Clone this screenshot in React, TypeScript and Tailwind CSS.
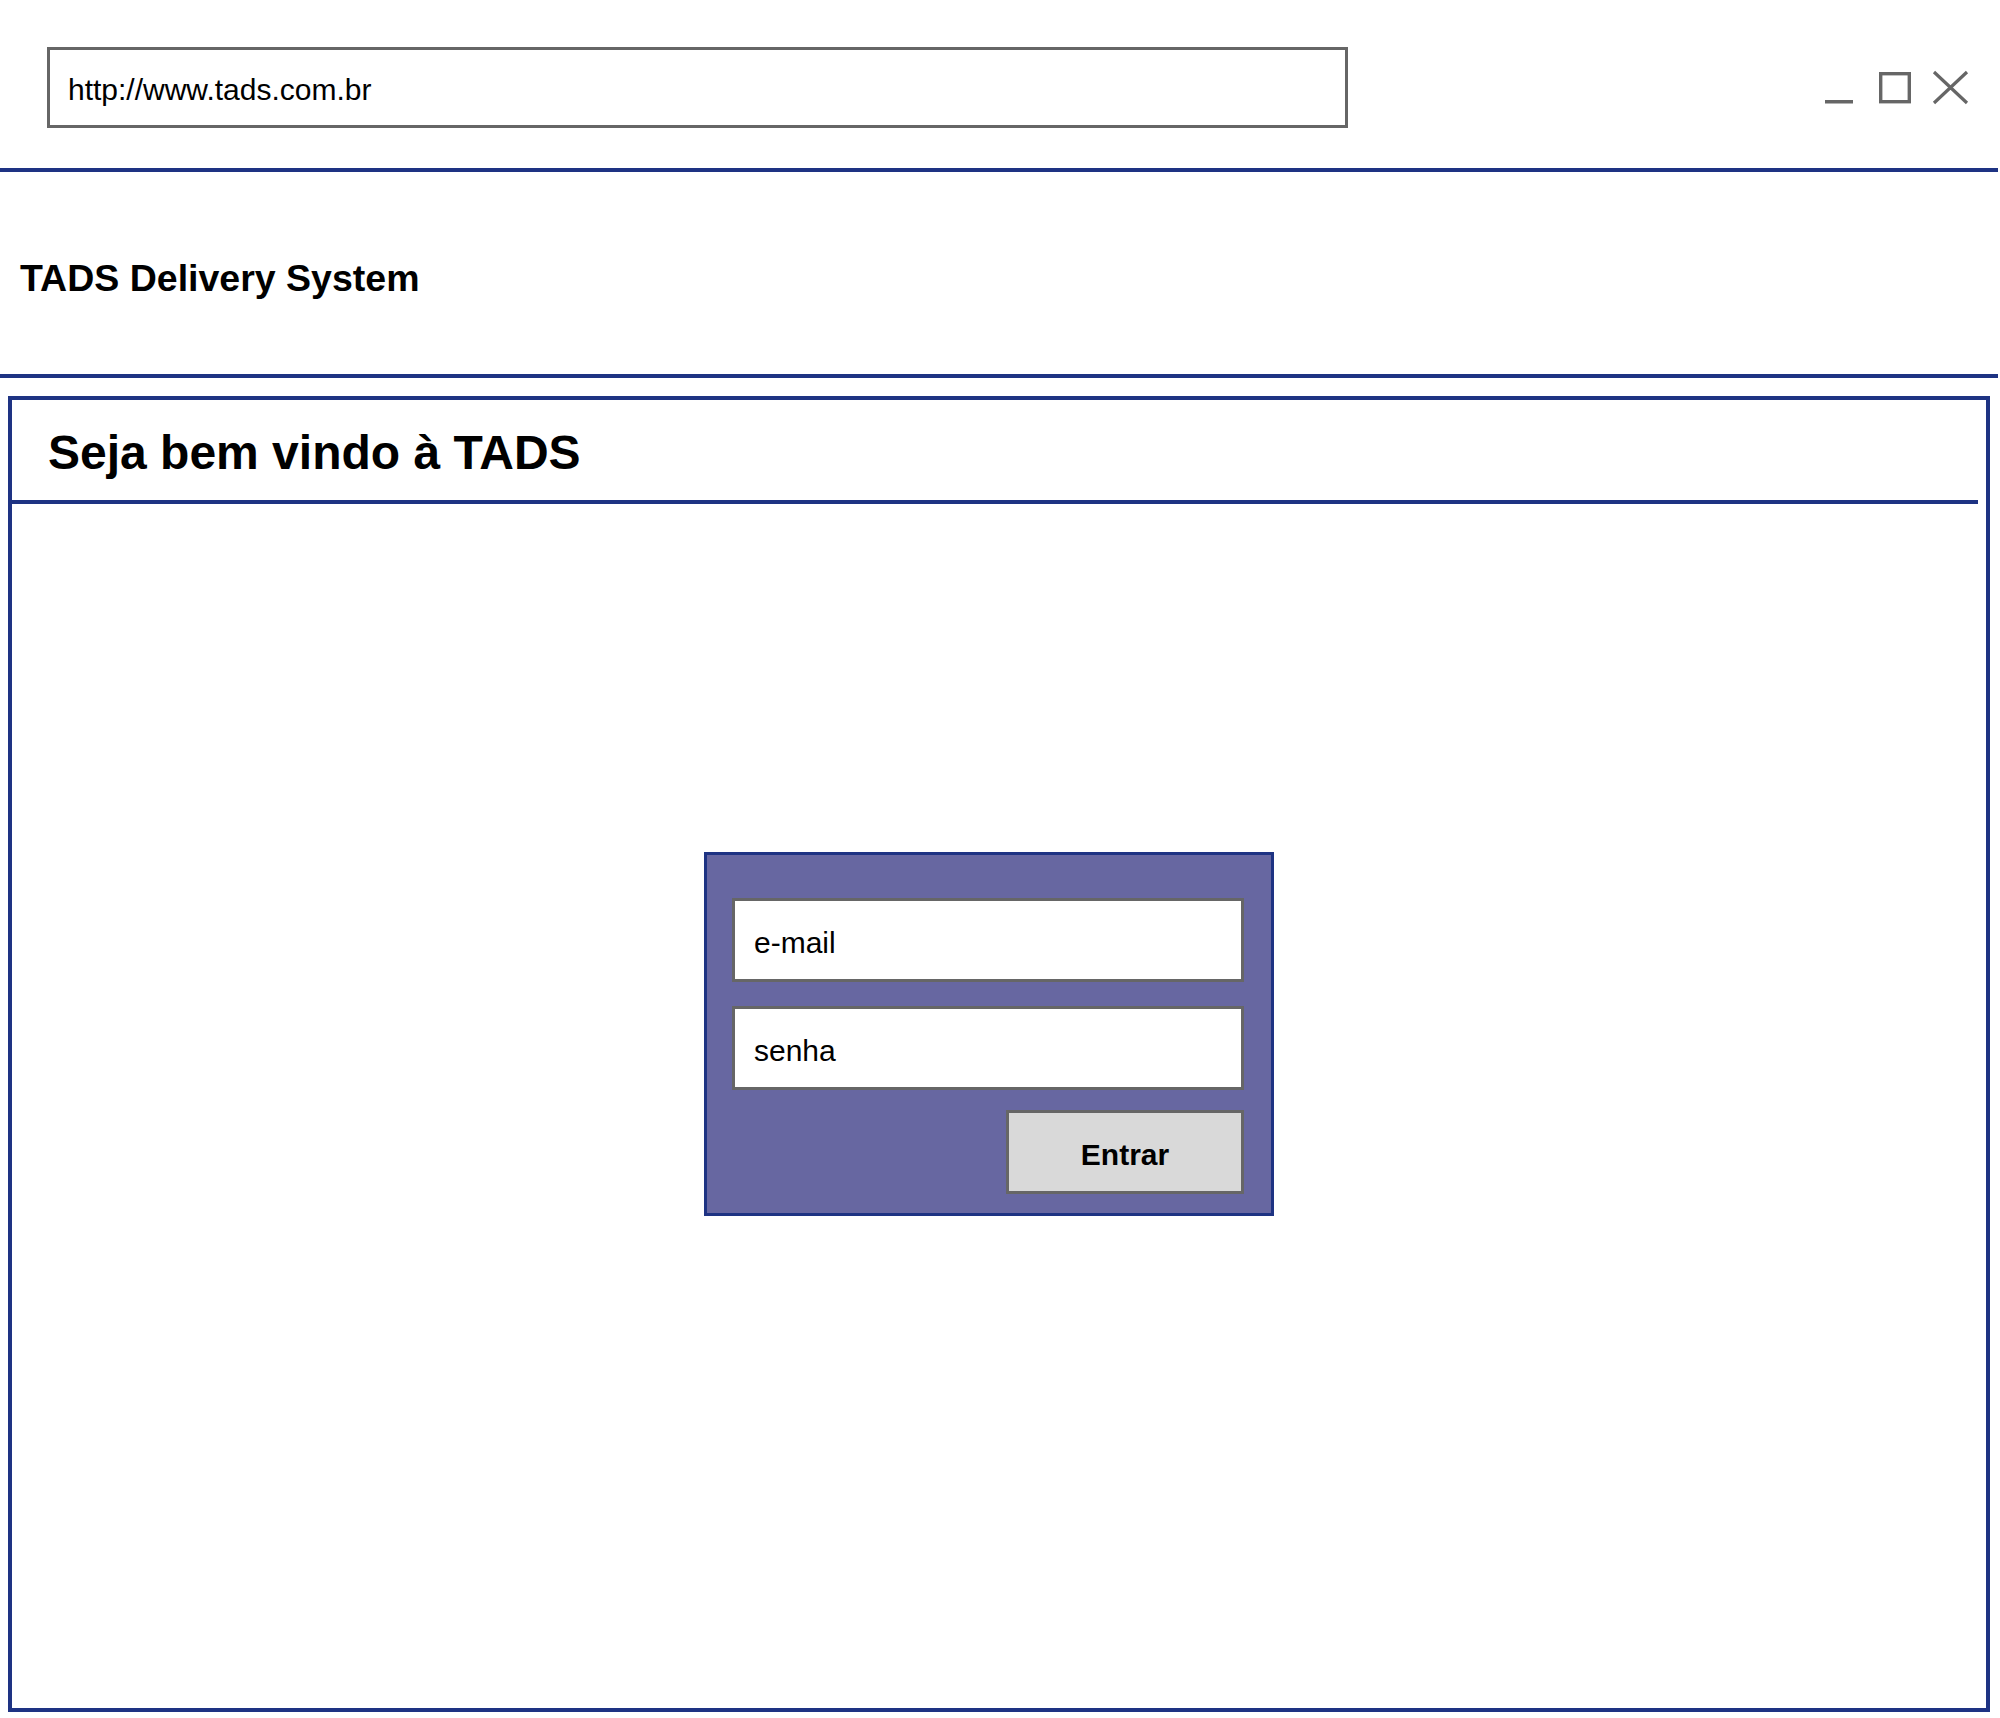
const navy = "bg-[#1e3383]";

const WindowControls = () => (
  <svg width="152" height="40" viewBox="0 0 152 40" fill="none" className="mt-[21px] mr-[28px]">
    {/* minimize */}
    <rect x="5" y="32" width="28" height="3.5" fill="#666666" />
    {/* maximize */}
    <rect x="60.7" y="5.7" width="28.6" height="28" stroke="#666666" strokeWidth="3.4" />
    {/* close */}
    <path d="M114 4 L147 35 M147 4 L114 35" stroke="#666666" strokeWidth="3.2" />
  </svg>
);

export default function App() {
  return (
    <div
      className="w-[2000px] h-[1718px] bg-white text-black flex flex-col overflow-hidden"
      style={{ fontFamily: "'Liberation Sans', Arial, Helvetica, sans-serif" }}
    >
      {/* Browser bar */}
      <div className="h-[168px] flex justify-between items-start pt-[47px] pl-[47px]">
        <div className="w-[1301px] h-[81px] border-[3px] border-[#666666] flex items-center pl-[18px] pt-[5px]">
          <span className="text-[30px] leading-none">http://www.tads.com.br</span>
        </div>
        <WindowControls />
      </div>
      <div className={`h-[4px] w-[1998px] ${navy}`} />

      {/* Site header */}
      <div className="h-[202px] flex items-center pl-[20px] pt-[12px]">
        <h1 className="text-[37.5px] font-bold leading-none">TADS Delivery System</h1>
      </div>
      <div className={`h-[4px] w-[1998px] ${navy}`} />

      {/* Main panel */}
      <div className="mt-[18px] ml-[8px] w-[1982px] h-[1316px] border-[4px] border-[#1e3383] flex flex-col">
        <div className="h-[100px] flex items-center pl-[36px] pt-[6px]">
          <h2 className="text-[48px] font-bold leading-none">Seja bem vindo à TADS</h2>
        </div>
        <div className={`h-[4px] w-[1966px] ${navy}`} />

        <div className="flex-1 pl-[692px] pt-[348px]">
          <form className="w-[570px] h-[364px] bg-[#6767a1] border-[3px] border-[#1e3383] pt-[43px] pl-[25px] pr-[27px] flex flex-col">
            <div className="w-[512px] h-[84px] bg-white border-[3px] border-[#666666] flex items-center pl-[19px] pt-[5px]">
              <span className="text-[30px] leading-none">e-mail</span>
            </div>
            <div className="mt-[24px] w-[512px] h-[84px] bg-white border-[3px] border-[#666666] flex items-center pl-[19px] pt-[5px]">
              <span className="text-[30px] leading-none">senha</span>
            </div>
            <div className="mt-[20px] flex justify-end">
              <button
                type="button"
                className="w-[238px] h-[84px] bg-[#d9d9d9] border-[3px] border-[#666666] flex items-center justify-center pt-[5px] text-[30px] font-bold leading-none"
              >
                Entrar
              </button>
            </div>
          </form>
        </div>
      </div>
    </div>
  );
}
